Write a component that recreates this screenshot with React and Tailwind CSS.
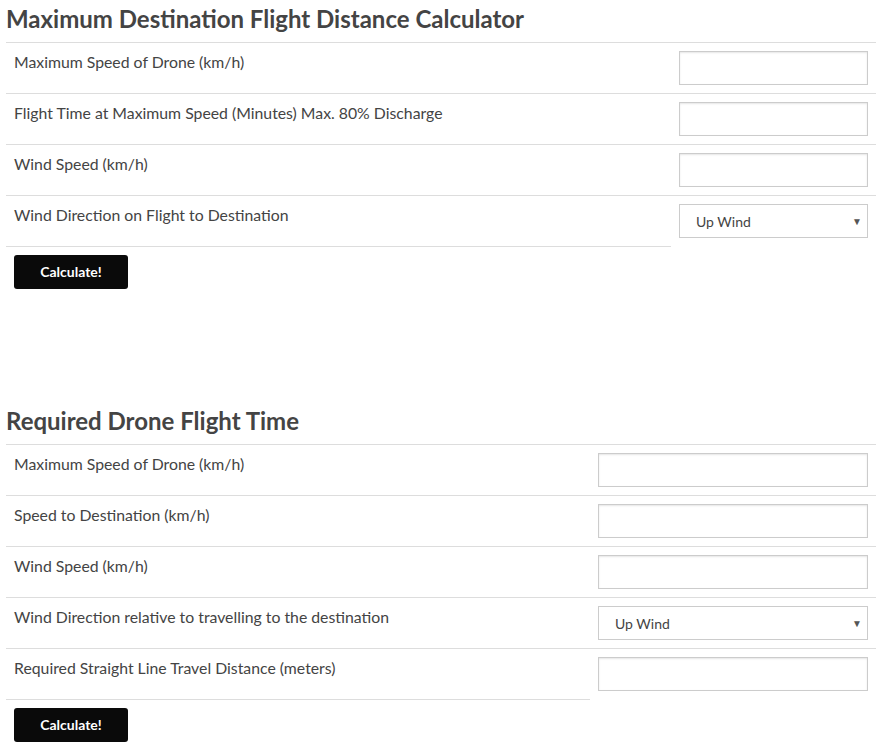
const calc1 = [
  { label: 'Maximum Speed of Drone (km/h)' },
  { label: 'Flight Time at Maximum Speed (Minutes) Max. 80% Discharge' },
  { label: 'Wind Speed (km/h)' },
  { label: 'Wind Direction on Flight to Destination', select: true },
];

const calc2 = [
  { label: 'Maximum Speed of Drone (km/h)' },
  { label: 'Speed to Destination (km/h)' },
  { label: 'Wind Speed (km/h)' },
  { label: 'Wind Direction relative to travelling to the destination', select: true },
  { label: 'Required Straight Line Travel Distance (meters)' },
];

function Field({ select }) {
  if (select) {
    return (
      <div className="relative h-[34px] w-full border border-[#ccc] bg-white">
        <span className="absolute left-[16px] top-[8px] text-[14px] leading-[18px] text-[#444]">Up Wind</span>
        <span className="absolute right-[5px] top-[8px] text-[10px] leading-[16px] text-[#555]">▼</span>
      </div>
    );
  }
  return <input type="text" className="block h-[34px] w-full border border-[#ccc] bg-white shadow-[inset_0_1px_2px_rgba(0,0,0,0.1)] outline-none" />;
}

function Calculator({ title, rows, fieldWidth }) {
  return (
    <section>
      <h2 className="pt-[2px] pb-[6px] text-[24px] font-bold leading-[34px] text-[#444]">{title}</h2>
      <div>
        {rows.map((row, i) => (
          <div key={i} className="flex">
            <div className={`flex-1 border-t border-[#ddd] px-[8px] pt-[9px] pb-[21px] text-[15.8px] leading-[20px] text-[#444] ${i === rows.length - 1 ? 'border-b' : ''}`}>
              {row.label}
            </div>
            <div className={`${fieldWidth} border-t border-[#ddd] p-[8px]`}>
              <Field select={row.select} />
            </div>
          </div>
        ))}
      </div>
      <div className="px-[8px] pt-[8px]">
        <button className="block h-[34px] w-[114px] rounded-[3px] bg-[#0a0a0a] text-[14px] font-bold leading-[34px] text-white">Calculate!</button>
      </div>
    </section>
  );
}

export default function App() {
  return (
    <div className="min-h-screen bg-white pl-[6px] pr-px font-['Lato','Liberation_Sans',sans-serif]">
      <Calculator title="Maximum Destination Flight Distance Calculator" rows={calc1} fieldWidth="w-[205px]" />
      <div className="h-[113px]" />
      <Calculator title="Required Drone Flight Time" rows={calc2} fieldWidth="w-[286px]" />
    </div>
  );
}
